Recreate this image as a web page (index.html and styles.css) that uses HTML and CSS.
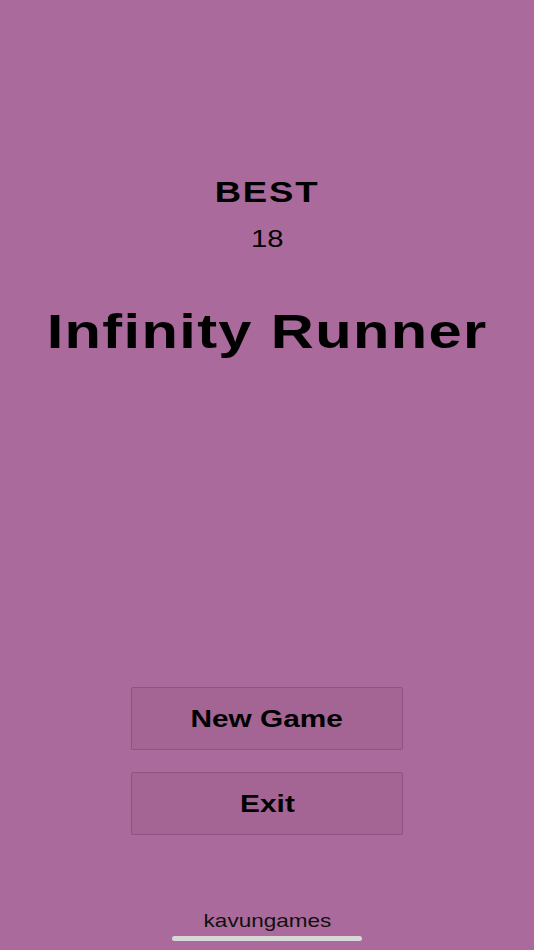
FILE: index.html
```html
<!DOCTYPE html>
<html>
<head>
  <title>Infinity Runner</title>
  <link rel="stylesheet" href="styles.css">
</head>
<body>
  <div class="screen">
    <div class="best-label wide">BEST</div>
    <div class="best-score wide">18</div>
    <h1 class="title wide">Infinity Runner</h1>
    <div class="menu">
      <button class="menu-btn"><span class="wide">New Game</span></button>
      <button class="menu-btn"><span class="wide">Exit</span></button>
    </div>
    <div class="credit wide">kavungames</div>
    <div class="home-bar"></div>
  </div>
</body>
</html>
```

FILE: styles.css
```css
html, body {
  margin: 0;
  padding: 0;
}

body {
  background: #ab6a9c;
  font-family: "Liberation Sans", Arial, sans-serif;
  color: #000;
}

.screen {
  position: relative;
  height: 950px;
  display: flex;
  flex-direction: column;
  align-items: center;
  padding-top: 175px;
  box-sizing: border-box;
}

/* game text is drawn stretched sideways */
.wide {
  display: inline-block;
  transform: scaleX(1.217);
}

.best-label {
  font-size: 30px;
  line-height: 34px;
  font-weight: bold;
  letter-spacing: 1.5px;
}

.best-score {
  margin-top: 15px;
  font-size: 24px;
  line-height: 30px;
}

.title {
  margin: 47px 0 0;
  font-size: 49px;
  line-height: 60px;
  font-weight: bold;
  letter-spacing: 1.1px;
}

.menu {
  margin-top: 326px;
  display: flex;
  flex-direction: column;
  gap: 22px;
}

.menu-btn {
  width: 272px;
  height: 63px;
  box-sizing: border-box;
  padding: 0;
  background: #a46594;
  border: 1px solid #8e5480;
  border-radius: 2px;
  font-family: inherit;
  font-size: 24.5px;
  font-weight: bold;
  color: #000;
  cursor: pointer;
}

.credit {
  margin-top: 75px;
  font-size: 18.5px;
  line-height: 22px;
  color: #111;
}

.home-bar {
  position: absolute;
  bottom: 9px;
  left: 172px;
  width: 190px;
  height: 5px;
  border-radius: 3px;
  background: #d8d8d8;
}
```
